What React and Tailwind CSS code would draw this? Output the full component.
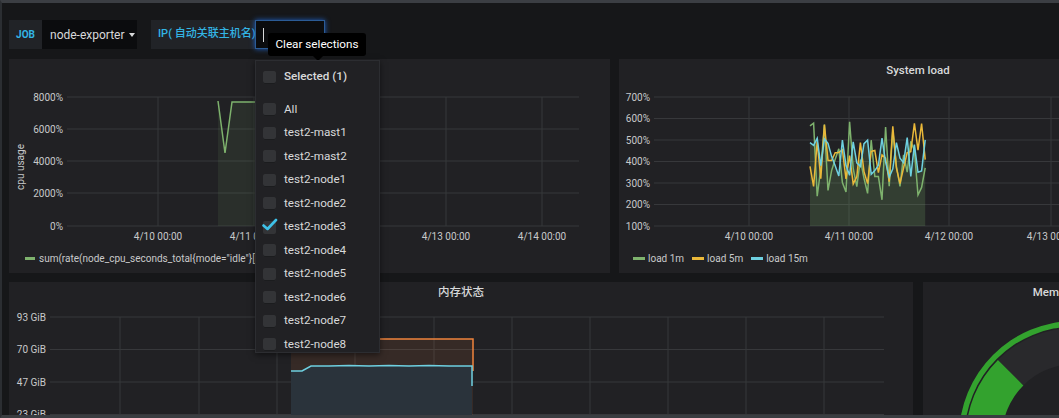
import React from 'react';

const hosts = [
  'test2-mast1', 'test2-mast2', 'test2-node1', 'test2-node2', 'test2-node3',
  'test2-node4', 'test2-node5', 'test2-node6', 'test2-node7', 'test2-node8',
];

// deterministic noise for the load chart
const series = (seed, base, spread) => {
  let s = seed;
  const out = [];
  for (let i = 0; i < 33; i++) {
    s = (s * 9301 + 49297) % 233280;
    out.push(base + (s / 233280 - 0.5) * spread);
  }
  return out;
};

const loadY = (v) => 167 - ((v - 100) / 100) * 21.5;
const toPts = (vals) => vals.map((v, i) => `${191 + i * 3.6},${loadY(v)}`).join(' ');

const polar = (cx, cy, r, deg) => [cx + r * Math.cos((deg * Math.PI) / 180), cy + r * Math.sin((deg * Math.PI) / 180)];
const band = (cx, cy, r0, r1, a0, a1) => {
  const [x0, y0] = polar(cx, cy, r1, a0);
  const [x1, y1] = polar(cx, cy, r1, a1);
  const [x2, y2] = polar(cx, cy, r0, a1);
  const [x3, y3] = polar(cx, cy, r0, a0);
  const large = a1 - a0 > 180 ? 1 : 0;
  return `M${x0} ${y0} A${r1} ${r1} 0 ${large} 1 ${x1} ${y1} L${x2} ${y2} A${r0} ${r0} 0 ${large} 0 ${x3} ${y3} Z`;
};

const Checkbox = () => (
  <span className="w-[13px] h-[13px] rounded-[2px] bg-[#333437] shadow-[inset_0_-1px_0_#1b1c1e] shrink-0" />
);

const CpuPanel = () => {
  const yTicks = [['8000%', 38], ['6000%', 70], ['4000%', 102], ['2000%', 134], ['0%', 167]];
  const xTicks = [['4/10 00:00', 149], ['4/11 00:00', 245], ['4/12 00:00', 341], ['4/13 00:00', 437], ['4/14 00:00', 533]];
  return (
    <div className="w-[601px] h-full bg-[#212124] flex flex-col shrink-0">
      <div className="h-[24px]" />
      <svg width="601" height="164" className="block">
        <g transform="translate(0,-24)">
          {yTicks.map(([t, y]) => (
            <g key={t}>
              <line x1="58" x2="570" y1={y} y2={y} stroke="#37383b" />
              <text x="54" y={y + 3.5} fontSize="10" fill="#c8c9ca" textAnchor="end">{t}</text>
            </g>
          ))}
          {xTicks.map(([t, x]) => (
            <g key={t}>
              <line x1={x} x2={x} y1="38" y2="167" stroke="#37383b" />
              <text x={x} y="181" fontSize="10" fill="#c8c9ca" textAnchor="middle">{t}</text>
            </g>
          ))}
          <text x="15" y="108" fontSize="10" fill="#c8c9ca" textAnchor="middle" transform="rotate(-90 15 108)">cpu usage</text>
          <polygon points="209,42 216,94 223,43 300,43 360,43 360,167 209,167" fill="#7eb26d" fillOpacity="0.1" />
          <polyline points="209,42 216,94 223,43 300,43 360,43" fill="none" stroke="#7eb26d" strokeWidth="1.5" />
        </g>
      </svg>
      <div className="h-[22px] flex items-center pl-[16px] gap-[4px] text-[10px] text-[#c8c9ca] whitespace-nowrap overflow-hidden">
        <span className="w-[10px] h-[3px] bg-[#7eb26d] shrink-0" />
        <span>sum(rate(node_cpu_seconds_total{'{'}mode="idle"{'}'}[1m]))</span>
      </div>
    </div>
  );
};

const LoadPanel = () => {
  const yTicks = ['700%', '600%', '500%', '400%', '300%', '200%', '100%'];
  const xTicks = [['4/10 00:00', 130], ['4/11 00:00', 230], ['4/12 00:00', 330], ['4/13 00:00', 432]];
  const g = series(17, 410, 400);
  const y = series(53, 430, 300);
  const b = series(91, 420, 200);
  const fill = `191,167 ${toPts(b)} ${191 + 32 * 3.6},167`;
  return (
    <div className="w-[598px] h-full bg-[#212124] flex flex-col shrink-0">
      <div className="h-[24px] flex items-center justify-center text-[11.5px] font-medium text-[#d8d9da]">System load</div>
      <svg width="598" height="164" className="block">
        <g transform="translate(0,-24)">
          {yTicks.map((t, i) => (
            <g key={t}>
              <line x1="35" x2="598" y1={38 + i * 21.5} y2={38 + i * 21.5} stroke="#37383b" />
              <text x="31" y={38 + i * 21.5 + 3.5} fontSize="10" fill="#c8c9ca" textAnchor="end">{t}</text>
            </g>
          ))}
          {xTicks.map(([t, x]) => (
            <g key={t}>
              <line x1={x} x2={x} y1="38" y2="167" stroke="#37383b" />
              <text x={x} y="181" fontSize="10" fill="#c8c9ca" textAnchor="middle">{t}</text>
            </g>
          ))}
          <polygon points={fill} fill="#7eb26d" fillOpacity="0.2" />
          <polyline points={toPts(g)} fill="none" stroke="#7eb26d" strokeWidth="1.5" />
          <polyline points={toPts(y)} fill="none" stroke="#eab839" strokeWidth="1.5" />
          <polyline points={toPts(b)} fill="none" stroke="#6ed0e0" strokeWidth="1.5" />
        </g>
      </svg>
      <div className="h-[22px] flex items-center pl-[14px] gap-[8px] text-[10px] text-[#c8c9ca] whitespace-nowrap">
        {[['load 1m', '#7eb26d'], ['load 5m', '#eab839'], ['load 15m', '#6ed0e0']].map(([t, c]) => (
          <span key={t} className="flex items-center gap-[3px]">
            <span className="w-[12px] h-[3px]" style={{ background: c }} />
            {t}
          </span>
        ))}
      </div>
    </div>
  );
};

const MemPanel = () => {
  const yTicks = [['93 GiB', 37], ['70 GiB', 69.5], ['47 GiB', 102], ['23 GiB', 134.5]];
  const xs = [111, 190, 268, 346, 425, 503, 581, 659, 737, 815];
  return (
    <div className="w-[904px] h-full bg-[#212124] flex flex-col shrink-0">
      <div className="h-[24px] flex items-center justify-center text-[11.5px] font-medium text-[#d8d9da]">内存状态</div>
      <svg width="904" height="130" className="block">
        <g transform="translate(0,-24)">
          {yTicks.map(([t, y]) => (
            <g key={t}>
              <line x1="41" x2="875" y1={y} y2={y} stroke="#37383b" />
              <text x="37" y={y + 3.5} fontSize="10" fill="#c8c9ca" textAnchor="end">{t}</text>
            </g>
          ))}
          {xs.map((x) => (
            <line key={x} x1={x} x2={x} y1="37" y2="160" stroke="#37383b" />
          ))}
          <rect x="282" y="59" width="182" height="110" fill="#f2843a" fillOpacity="0.1" />
          <polygon points="282,91 293,91 302,86 340,85.5 380,86 420,85.5 463,86 463,169 282,169" fill="#2a333b" />
          <polyline points="282,59 464,59 464,91" fill="none" stroke="#ef843c" strokeWidth="1.5" />
          <polyline points="282,91 293,91 302,86 320,86 340,85.5 360,86 380,85.5 400,86 420,85.5 440,86 463,86 463,106" fill="none" stroke="#6ed0e0" strokeWidth="1.5" />
        </g>
      </svg>
    </div>
  );
};

const GaugePanel = () => (
  <div className="w-[262px] h-full bg-[#212124] flex flex-col shrink-0">
    <div className="h-[24px] flex items-center justify-center text-[11.5px] font-medium text-[#d8d9da]">Memory</div>
    <svg width="262" height="130" className="block">
      <g transform="translate(0,-24)">
        <path d={band(152, 157, 110.5, 116, 135, 405)} fill="#33a22e" />
        <path d={band(152, 157, 73, 109, 225, 405)} fill="#29292c" />
        <path d={band(152, 157, 73, 109, 135, 225)} fill="#33a22e" />
      </g>
    </svg>
  </div>
);

export default function App() {
  return (
    <div className="relative w-[1059px] h-[418px] overflow-hidden bg-[#161719] border-t-[3px] border-t-[#3b3e43] border-l-2 border-l-[#2b2e32] border-b-[3px] border-b-[#3a3d41] font-[Roboto,'Noto_Sans_CJK_SC',sans-serif] flex flex-col">
      {/* template variables */}
      <div className="flex items-center gap-[14px] pl-[7px] pt-[17px] h-[46px] shrink-0">
        <div className="flex h-[29px]">
          <div className="w-[33px] bg-[#212327] flex items-center justify-center text-[10px] font-bold text-[#33b5e5]">JOB</div>
          <div className="w-[95px] bg-[#0b0c0e] flex items-center pl-[8px] gap-[4px] text-[12px] text-[#d8d9da]">
            node-exporter
            <span className="w-0 h-0 border-l-[3.5px] border-r-[3.5px] border-t-[4px] border-l-transparent border-r-transparent border-t-[#d8d9da]" />
          </div>
        </div>
        <div className="flex h-[29px]">
          <div className="w-[104px] bg-[#212327] flex items-center pl-[7px] text-[11px] font-medium text-[#33b5e5] whitespace-nowrap">IP( 自动关联主机名)</div>
          <div className="w-[70px] bg-[#0b0c0e] border border-[#2b5b95] shadow-[0_0_5px_#1f60c4] flex items-center pl-[7px]">
            <span className="w-px h-[14px] bg-[#d8d9da]" />
          </div>
        </div>
      </div>

      {/* panels */}
      <div className="flex flex-col gap-[9px] pl-[7px] mt-[10px]">
        <div className="flex gap-[9px] h-[214px]">
          <CpuPanel />
          <LoadPanel />
        </div>
        <div className="flex gap-[10px] h-[140px]">
          <MemPanel />
          <GaugePanel />
        </div>
      </div>

      {/* tooltip */}
      <div className="absolute left-[266px] top-[30px] w-[98px] h-[23px] bg-black rounded-[3px] flex items-center justify-center text-[11.7px] text-white">
        Clear selections
        <span className="absolute left-[45px] top-[23px] w-0 h-0 border-l-[5px] border-r-[5px] border-t-[5px] border-l-transparent border-r-transparent border-t-black" />
      </div>

      {/* options dropdown */}
      <div className="absolute left-[253px] top-[57px] w-[125px] h-[293px] bg-[#212124] border border-[#2c2d31] shadow-[0_2px_6px_rgba(0,0,0,0.5)] pt-[4px] text-[11.7px] text-[#d8d9da]">
        <div className="h-[24px] flex items-center gap-[8px] pl-[7px] font-medium">
          <Checkbox />
          Selected (1)
        </div>
        <div className="h-[9px]" />
        <div className="h-[23.5px] flex items-center gap-[8px] pl-[7px]">
          <Checkbox />
          All
        </div>
        {hosts.map((h) => (
          <div key={h} className="h-[23.5px] flex items-center gap-[8px] pl-[7px]">
            {h === 'test2-node3' ? (
              <span className="relative w-[13px] h-[13px] shrink-0">
                <span className="absolute inset-0 rounded-[2px] bg-[#333437]" />
                <svg className="absolute -left-[1px] -top-[3px]" width="16" height="14" viewBox="0 0 16 14">
                  <path d="M1.5 7.5 L5.5 11 L14 2" fill="none" stroke="#3ec1e8" strokeWidth="2.6" strokeLinecap="round" strokeLinejoin="round" />
                </svg>
              </span>
            ) : (
              <Checkbox />
            )}
            {h}
          </div>
        ))}
      </div>
    </div>
  );
}
